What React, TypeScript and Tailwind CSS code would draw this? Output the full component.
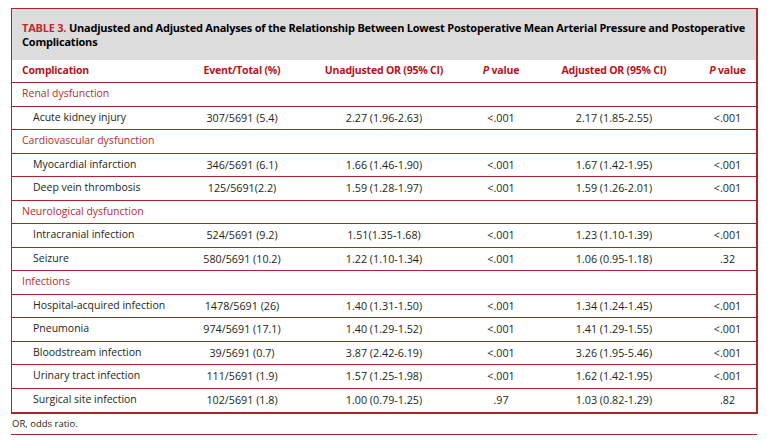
import React from "react";

type Row =
  | { kind: "cat"; label: string }
  | { kind: "item"; label: string; ev: string; un: string; p1: string; ad: string; p2: string };

const rows: Row[] = [
  { kind: "cat", label: "Renal dysfunction" },
  { kind: "item", label: "Acute kidney injury", ev: "307/5691 (5.4)", un: "2.27 (1.96-2.63)", p1: "<.001", ad: "2.17 (1.85-2.55)", p2: "<.001" },
  { kind: "cat", label: "Cardiovascular dysfunction" },
  { kind: "item", label: "Myocardial infarction", ev: "346/5691 (6.1)", un: "1.66 (1.46-1.90)", p1: "<.001", ad: "1.67 (1.42-1.95)", p2: "<.001" },
  { kind: "item", label: "Deep vein thrombosis", ev: "125/5691(2.2)", un: "1.59 (1.28-1.97)", p1: "<.001", ad: "1.59 (1.26-2.01)", p2: "<.001" },
  { kind: "cat", label: "Neurological dysfunction" },
  { kind: "item", label: "Intracranial infection", ev: "524/5691 (9.2)", un: "1.51(1.35-1.68)", p1: "<.001", ad: "1.23 (1.10-1.39)", p2: "<.001" },
  { kind: "item", label: "Seizure", ev: "580/5691 (10.2)", un: "1.22 (1.10-1.34)", p1: "<.001", ad: "1.06 (0.95-1.18)", p2: ".32" },
  { kind: "cat", label: "Infections" },
  { kind: "item", label: "Hospital-acquired infection", ev: "1478/5691 (26)", un: "1.40 (1.31-1.50)", p1: "<.001", ad: "1.34 (1.24-1.45)", p2: "<.001" },
  { kind: "item", label: "Pneumonia", ev: "974/5691 (17.1)", un: "1.40 (1.29-1.52)", p1: "<.001", ad: "1.41 (1.29-1.55)", p2: "<.001" },
  { kind: "item", label: "Bloodstream infection", ev: "39/5691 (0.7)", un: "3.87 (2.42-6.19)", p1: "<.001", ad: "3.26 (1.95-5.46)", p2: "<.001" },
  { kind: "item", label: "Urinary tract infection", ev: "111/5691 (1.9)", un: "1.57 (1.25-1.98)", p1: "<.001", ad: "1.62 (1.42-1.95)", p2: "<.001" },
  { kind: "item", label: "Surgical site infection", ev: "102/5691 (1.8)", un: "1.00 (0.79-1.25)", p1: ".97", ad: "1.03 (0.82-1.29)", p2: ".82" },
];

const grid = "grid grid-cols-[177px_106px_178px_56px_170px_57px] items-center";

export default function App() {
  return (
    <div className="w-[767px] h-[441px] bg-white text-[#231f20] font-['Open_Sans','Liberation_Sans',sans-serif] text-[10.75px] pt-[8px] pl-[11px]">
      <div className="w-[747px] border-t border-l border-r-2 border-b-2 border-[#b0222a]">
        <div className="bg-[#dcdcdc] pl-[10px] pt-[12px] pb-[11px] text-[11px] leading-[14px] font-bold text-black tracking-[-0.22px] whitespace-nowrap">
          <div>
            <span className="text-[#c1272d]">TABLE 3.</span> Unadjusted and Adjusted Analyses of the Relationship Between Lowest Postoperative Mean Arterial Pressure and Postoperative
          </div>
          <div>Complications</div>
        </div>
        <div className={`${grid} h-[23px] border-b border-[#b0222a] font-bold text-[#b5121b] text-[10.5px] tracking-[-0.2px]`}>
          <div className="pl-[10px]">Complication</div>
          <div className="text-center">Event/Total (%)</div>
          <div className="text-center">Unadjusted OR (95% CI)</div>
          <div className="text-center">
            <i>P</i> value
          </div>
          <div className="text-center">Adjusted OR (95% CI)</div>
          <div className="text-center">
            <i>P</i> value
          </div>
        </div>
        {rows.map((r, i) => {
          const last = i === rows.length - 1;
          const b = last ? "" : "border-b border-[#b0222a]";
          if (r.kind === "cat") {
            return (
              <div key={i} className={`h-[23.5px] flex items-center pl-[10px] text-[#c1272d] text-[10.5px] ${b}`}>
                {r.label}
              </div>
            );
          }
          return (
            <div key={i} className={`${grid} h-[23.5px] ${b}`}>
              <div className="pl-[21px] text-[10.5px]">{r.label}</div>
              <div className="text-center">{r.ev}</div>
              <div className="text-center">{r.un}</div>
              <div className="text-center">{r.p1}</div>
              <div className="text-center">{r.ad}</div>
              <div className="text-center">{r.p2}</div>
            </div>
          );
        })}
      </div>
      <div className="text-[9.5px] leading-[14px] pt-[3px] pl-[1px]">OR, odds ratio.</div>
      <div className="w-[746px] mt-[3px] border-t border-[#b0222a]" />
    </div>
  );
}
